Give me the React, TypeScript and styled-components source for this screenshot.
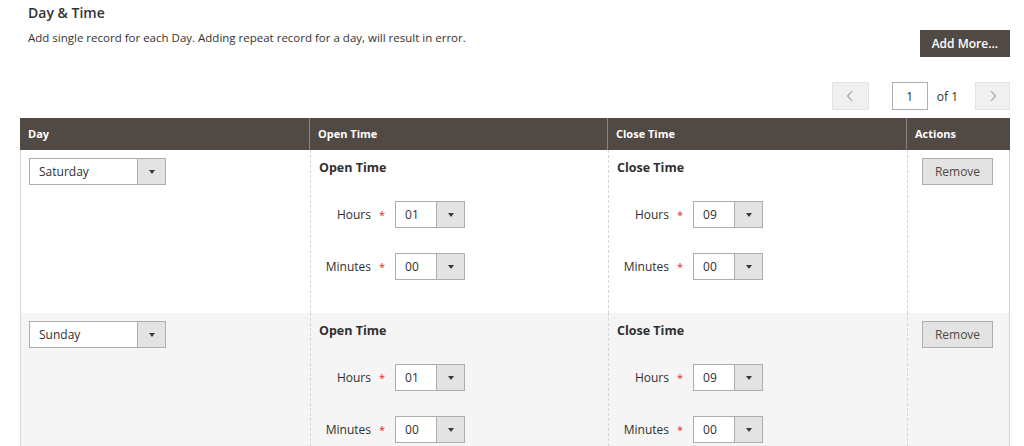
import React from 'react';
import styled, { createGlobalStyle } from 'styled-components';

const GlobalStyle = createGlobalStyle`
  html, body {
    margin: 0;
    padding: 0;
    background: #fff;
  }
  body {
    font-family: "Open Sans", "Liberation Sans", sans-serif;
    color: #303030;
  }
`;

const Page = styled.div`
  width: 1024px;
  height: 446px;
  overflow: hidden;
  box-sizing: border-box;
  padding: 0 14px 0 20px;
`;

const Top = styled.div`
  display: flex;
  justify-content: space-between;
  align-items: flex-start;
`;

const Intro = styled.div`
  padding: 4px 0 0 8px;
`;

const Title = styled.div`
  font-size: 14px;
  font-weight: 600;
  color: #333;
  line-height: 18px;
`;

const Note = styled.div`
  margin-top: 8px;
  font-size: 11.5px;
  line-height: 16px;
  color: #333;
`;

const PrimaryButton = styled.button`
  margin-top: 30px;
  height: 27px;
  padding: 0 11px;
  border: 1px solid #514943;
  background: #514943;
  color: #fff;
  font-family: inherit;
  font-size: 12px;
  font-weight: 600;
  cursor: pointer;
`;

const Pager = styled.div`
  display: flex;
  justify-content: flex-end;
  align-items: center;
  margin-top: 25px;
  height: 28px;
`;

const PageButton = styled.button`
  width: ${p => p.$w}px;
  height: 28px;
  border: 1px solid #e3e3e3;
  background: #f0f0f0;
  display: flex;
  align-items: center;
  justify-content: center;
  padding: 0;
  color: #a9a9a9;
`;

const PageInput = styled.div`
  width: 36px;
  height: 28px;
  box-sizing: border-box;
  margin-left: 23px;
  border: 1px solid #adadad;
  display: flex;
  align-items: center;
  justify-content: center;
  font-size: 12px;
  color: #303030;
`;

const PageTotal = styled.span`
  margin: 0 17px 0 9px;
  font-size: 12px;
  color: #303030;
`;

const Grid = styled.div`
  margin-top: 8px;
  border-left: 1px solid #d6d6d6;
  border-right: 1px solid #d6d6d6;
`;

const cols = '289px 298px 299px 1fr';

const HeadRow = styled.div`
  display: grid;
  grid-template-columns: ${cols};
  background: #514943;
  height: 32px;
  margin: 0 -1px;
`;

const HeadCell = styled.div`
  display: flex;
  align-items: center;
  padding: 0 0 1px 8px;
  color: #fff;
  font-size: 11px;
  font-weight: 700;
  border-left: 1px solid #8a837f;
  &:first-child {
    border-left: none;
  }
`;

const Row = styled.div`
  display: grid;
  grid-template-columns: ${cols};
  background: ${p => (p.$alt ? '#f5f5f5' : '#fff')};
`;

const Cell = styled.div`
  padding: 8px 8px 33px;
  border-left: 1px dashed #d6d6d6;
  &:first-child {
    border-left: none;
  }
`;

const ActionCell = styled(Cell)`
  display: flex;
  justify-content: center;
  align-items: flex-start;
  padding-left: 0;
  padding-right: 0;
`;

const GroupTitle = styled.div`
  margin-top: 1px;
  font-size: 12.5px;
  font-weight: 700;
  color: #303030;
  line-height: 18px;
`;

const Field = styled.div`
  display: flex;
  align-items: center;
  margin-top: ${p => p.$top}px;
`;

const Label = styled.span`
  width: 52px;
  text-align: right;
  font-size: 12px;
  color: #303030;
`;

const Star = styled.span`
  margin-left: 8px;
  color: #e22626;
  font-size: 11px;
`;

const SelectBox = styled.div`
  margin-left: ${p => p.$ml || 0}px;
  width: ${p => p.$w}px;
  height: 27px;
  box-sizing: border-box;
  border: 1px solid #adadad;
  background: #fff;
  display: flex;
  font-size: 12px;
  color: #303030;
`;

const SelectValue = styled.span`
  flex: 1;
  display: flex;
  align-items: center;
  padding-left: 9px;
`;

const SelectArrow = styled.span`
  width: 27px;
  border-left: 1px solid #adadad;
  background: #e3e3e3;
  display: flex;
  align-items: center;
  justify-content: center;
  &::after {
    content: '';
    border-left: 3.5px solid transparent;
    border-right: 3.5px solid transparent;
    border-top: 4px solid #41362f;
  }
`;

const SecondaryButton = styled.button`
  width: 71px;
  height: 27px;
  margin-left: -2px;
  border: 1px solid #adadad;
  background: #e3e3e3;
  color: #514943;
  font-family: inherit;
  font-size: 12px;
  padding: 0;
`;

const Select = ({ value, w, ml }: { value: string; w: number; ml?: number }) => (
  <SelectBox $w={w} $ml={ml}>
    <SelectValue>{value}</SelectValue>
    <SelectArrow />
  </SelectBox>
);

const TimeGroup = ({ title, hours, minutes }: { title: string; hours: string; minutes: string }) => (
  <>
    <GroupTitle>{title}</GroupTitle>
    <Field $top={24}>
      <Label>Hours</Label>
      <Star>*</Star>
      <Select value={hours} w={70} ml={10} />
    </Field>
    <Field $top={25}>
      <Label>Minutes</Label>
      <Star>*</Star>
      <Select value={minutes} w={70} ml={10} />
    </Field>
  </>
);

const Chevron = ({ dir }: { dir: 'left' | 'right' }) => (
  <svg width="8" height="12" viewBox="0 0 8 12">
    <path
      d={dir === 'left' ? 'M6 1 L1.5 6 L6 11' : 'M2 1 L6.5 6 L2 11'}
      fill="none"
      stroke="currentColor"
      strokeWidth="1.2"
    />
  </svg>
);

const rows = [
  { day: 'Saturday', open: '01', openMin: '00', close: '09', closeMin: '00' },
  { day: 'Sunday', open: '01', openMin: '00', close: '09', closeMin: '00' },
];

export default function App() {
  return (
    <Page>
      <GlobalStyle />
      <Top>
        <Intro>
          <Title>Day &amp; Time</Title>
          <Note>Add single record for each Day. Adding repeat record for a day, will result in error.</Note>
        </Intro>
        <PrimaryButton>Add More...</PrimaryButton>
      </Top>
      <Pager>
        <PageButton $w={37}>
          <Chevron dir="left" />
        </PageButton>
        <PageInput>1</PageInput>
        <PageTotal>of 1</PageTotal>
        <PageButton $w={35}>
          <Chevron dir="right" />
        </PageButton>
      </Pager>
      <Grid>
        <HeadRow>
          <HeadCell>Day</HeadCell>
          <HeadCell>Open Time</HeadCell>
          <HeadCell>Close Time</HeadCell>
          <HeadCell>Actions</HeadCell>
        </HeadRow>
        {rows.map((r, i) => (
          <Row key={r.day} $alt={i % 2 === 1}>
            <Cell>
              <Select value={r.day} w={137} />
            </Cell>
            <Cell>
              <TimeGroup title="Open Time" hours={r.open} minutes={r.openMin} />
            </Cell>
            <Cell>
              <TimeGroup title="Close Time" hours={r.close} minutes={r.closeMin} />
            </Cell>
            <ActionCell>
              <SecondaryButton>Remove</SecondaryButton>
            </ActionCell>
          </Row>
        ))}
      </Grid>
    </Page>
  );
}
